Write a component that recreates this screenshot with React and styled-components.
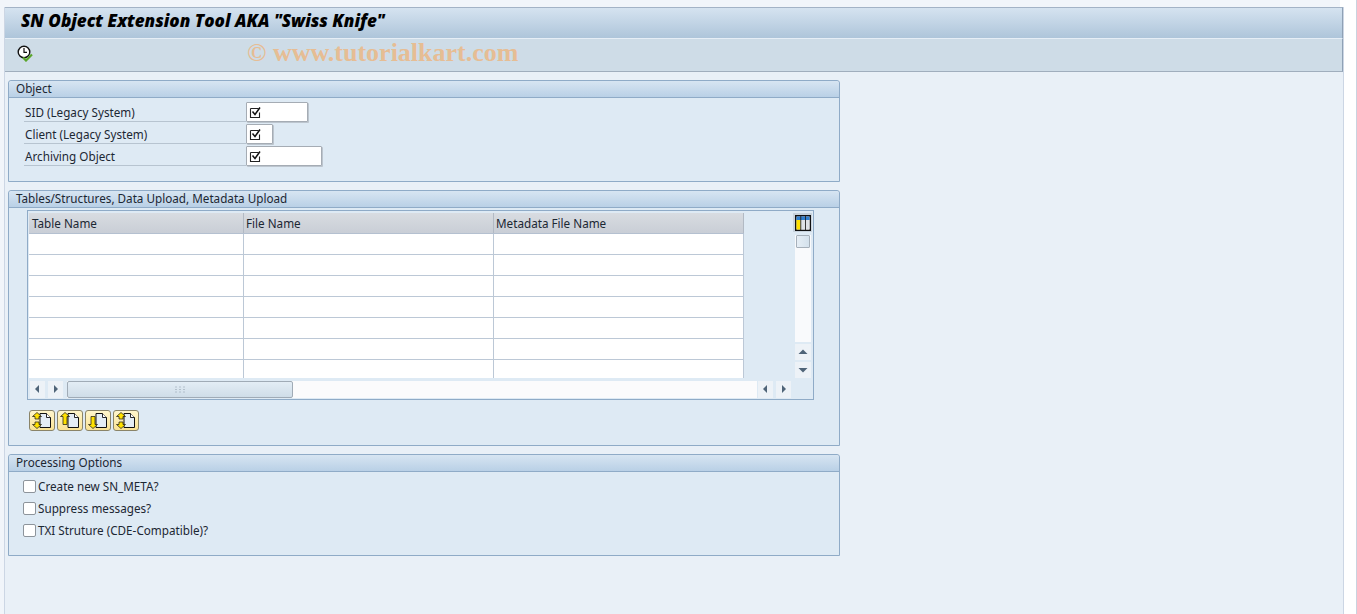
import React from 'react';
import styled, { createGlobalStyle } from 'styled-components';

const GlobalStyle = createGlobalStyle`
  html, body {
    margin: 0;
    padding: 0;
    height: 100%;
    background: #f3f7fb;
    overflow: hidden;
  }
  body {
    font-family: "Noto Sans", "Liberation Sans", sans-serif;
    font-size: 11.7px;
    color: #1c2733;
  }
`;

const ClockCheck = () => (
  <svg width="18" height="18" viewBox="0 0 18 18">
    <circle cx="7" cy="8" r="5.8" fill="#fff" stroke="#111" strokeWidth="1.4" />
    <path d="M7 4v4.3h3" fill="none" stroke="#111" strokeWidth="1.2" />
    <path d="M6 13.5l3 3 6-6" fill="none" stroke="#5aa52c" strokeWidth="2.2" />
  </svg>
);

const CheckMark = () => (
  <svg width="13" height="13" viewBox="0 0 13 13">
    <path d="M1.5 2.5h8M1.5 2.5v9h9v-5" fill="none" stroke="#222" strokeWidth="1.1" />
    <path d="M3.5 5.5l2.5 3 5-7" fill="none" stroke="#111" strokeWidth="1.5" />
  </svg>
);

const LayoutIcon = () => (
  <svg width="16" height="16" viewBox="0 0 16 16">
    <rect x="0.75" y="0.75" width="14.5" height="14.5" fill="#fff" stroke="#111" strokeWidth="1.5" />
    <rect x="1.5" y="1.5" width="13" height="3.5" fill="#2f7fd0" />
    <rect x="1.5" y="5" width="4" height="9.5" fill="#ffe100" />
    <rect x="6" y="5" width="4" height="9.5" fill="#dfe3e7" />
    <rect x="11" y="5" width="3.5" height="9.5" fill="#dfe3e7" />
    <path d="M5.75 1v14M10.5 1v14" stroke="#222" strokeWidth="0.9" />
  </svg>
);

const arrowPaths = {
  up: 'M5 0.5l4.5 4h-2.5v2.5h-4v-2.5h-2.5z',
  down: 'M5 16.5l4.5-4h-2.5v-2.5h-4v2.5h-2.5z',
  longUp: 'M5 0.5l4.5 4h-2.5v8h-4v-8h-2.5z',
  longDown: 'M5 16.5l4.5-4h-2.5v-8h-4v8h-2.5z',
};

const DocArrow = ({ name }) => (
  <path d={arrowPaths[name]} fill="#ffe100" stroke="#111" strokeWidth="0.7" />
);

const UploadIcon = ({ kind }) => (
  <svg width="20" height="17" viewBox="0 0 20 17">
    <path d="M8 1.5h6.5l4 4v10H8z" fill="#e4edf5" stroke="#111" strokeWidth="1" />
    <path d="M14.5 1.5v4h4" fill="#fff" stroke="#111" strokeWidth="0.9" />
    {kind === 'both' && <DocArrow name="up" />}
    {kind === 'both' && <DocArrow name="down" />}
    {kind === 'up' && <DocArrow name="longUp" />}
    {kind === 'down' && <DocArrow name="longDown" />}
  </svg>
);

const Triangle = ({ dir }) => {
  const points = {
    left: '7,2 7,10 3,6',
    right: '4,2 4,10 8,6',
    up: '1.5,8 10.5,8 6,3.5',
    down: '1.5,4 10.5,4 6,8.5',
  };
  return (
    <svg width="12" height="12" viewBox="0 0 12 12">
      <polygon points={points[dir]} fill="#4f6478" />
    </svg>
  );
};

const Grip = () => (
  <svg width="10" height="7" viewBox="0 0 10 7">
    <path d="M0.5 1h1M4.5 1h1M8.5 1h1M0.5 3.5h1M4.5 3.5h1M8.5 3.5h1M0.5 6h1M4.5 6h1M8.5 6h1" stroke="#8d9aa8" />
  </svg>
);

const App = () => (
  <Page>
    <GlobalStyle />
    <Main>
      <TitleBar>
        <Title>SN Object Extension Tool AKA "Swiss Knife"</Title>
      </TitleBar>
      <Toolbar>
        <ClockCheck />
        <Watermark>© www.tutorialkart.com</Watermark>
      </Toolbar>
      <Content>
        <Panel>
          <PanelHeader>Object</PanelHeader>
          <FieldBody>
            <FieldRow>
              <FieldLabel>SID (Legacy System)</FieldLabel>
              <Input $width={62}><CheckMark /></Input>
            </FieldRow>
            <FieldRow>
              <FieldLabel>Client (Legacy System)</FieldLabel>
              <Input $width={27}><CheckMark /></Input>
            </FieldRow>
            <FieldRow>
              <FieldLabel>Archiving Object</FieldLabel>
              <Input $width={76}><CheckMark /></Input>
            </FieldRow>
          </FieldBody>
        </Panel>

        <Panel>
          <PanelHeader>Tables/Structures, Data Upload, Metadata Upload</PanelHeader>
          <TableBody>
            <TableFrame>
              <GridColumn>
                <HeaderRow>
                  <HeaderCell $width={215} $pad={3}>Table Name</HeaderCell>
                  <HeaderCell $width={250} $pad={2}>File Name</HeaderCell>
                  <HeaderCell $width={250} $pad={2}>Metadata File Name</HeaderCell>
                </HeaderRow>
                {[0, 1, 2, 3, 4, 5, 6].map((row) => (
                  <DataRow key={row}>
                    <DataCell $width={215} />
                    <DataCell $width={250} />
                    <DataCell $width={250} />
                  </DataRow>
                ))}
              </GridColumn>
              <SideColumn>
                <LayoutButton><LayoutIcon /></LayoutButton>
                <VScroll>
                  <VThumb />
                </VScroll>
                <ScrollButton><Triangle dir="up" /></ScrollButton>
                <ScrollButton><Triangle dir="down" /></ScrollButton>
              </SideColumn>
              <HScrollRow>
                <ScrollButton $narrow><Triangle dir="left" /></ScrollButton>
                <ScrollButton $narrow><Triangle dir="right" /></ScrollButton>
                <HTrack>
                  <HThumb><Grip /></HThumb>
                </HTrack>
                <ScrollButton $narrow><Triangle dir="left" /></ScrollButton>
                <ScrollButton $narrow><Triangle dir="right" /></ScrollButton>
              </HScrollRow>
            </TableFrame>
            <ButtonRow>
              <IconButton><UploadIcon kind="both" /></IconButton>
              <IconButton><UploadIcon kind="up" /></IconButton>
              <IconButton><UploadIcon kind="down" /></IconButton>
              <IconButton><UploadIcon kind="both" /></IconButton>
            </ButtonRow>
          </TableBody>
        </Panel>

        <Panel>
          <PanelHeader>Processing Options</PanelHeader>
          <OptionBody>
            <OptionRow><CheckBox />Create new SN_META?</OptionRow>
            <OptionRow><CheckBox />Suppress messages?</OptionRow>
            <OptionRow><CheckBox />TXI Struture (CDE-Compatible)?</OptionRow>
          </OptionBody>
        </Panel>
      </Content>
    </Main>
  </Page>
);

export default App;

const Page = styled.div`
  height: 614px;
  box-sizing: border-box;
  padding: 7px 12px 0 4px;
  border-right: 1px solid #c9d3df;
  background: linear-gradient(90deg, #f1f5fa 0 1340px, #fff 1340px);
`;

const Main = styled.div`
  height: 100%;
  background: #e9f0f7;
  border-left: 1px solid #ccd6e4;
  border-right: 1px solid #ccd6e4;
`;

const TitleBar = styled.div`
  height: 24px;
  padding: 0 0 6px 16px;
  border-top: 1px solid #a3b3c6;
  border-right: 1px solid #8fa1b5;
  background: linear-gradient(#d5e3f0, #aec5da);
  display: flex;
  align-items: center;
`;

const Title = styled.div`
  font-family: "Open Sans", "Liberation Sans", sans-serif;
  font-size: 17.1px;
  font-weight: 800;
  font-style: italic;
  color: #000;
  white-space: nowrap;
`;

const Toolbar = styled.div`
  height: 27px;
  padding: 0 0 5px 12px;
  border-top: 1px solid #e6eef6;
  border-bottom: 1px solid #a0aebd;
  border-right: 1px solid #8fa1b5;
  background: #cedce7;
  display: flex;
  align-items: center;
`;

const Watermark = styled.div`
  margin-left: 212px;
  font-family: "Liberation Serif", serif;
  font-size: 26px;
  font-weight: 700;
  color: #e6bd94;
  white-space: nowrap;
`;

const Content = styled.div`
  padding: 8px 0 0 3px;
  display: flex;
  flex-direction: column;
  gap: 8px;
`;

const Panel = styled.section`
  width: 830px;
  border: 1px solid #8fabc7;
  border-radius: 3px 3px 0 0;
  background: #deeaf4;
`;

const PanelHeader = styled.div`
  height: 16px;
  line-height: 15px;
  padding-left: 7px;
  background: linear-gradient(#d7e5f2, #b9d0e6);
  border-bottom: 1px solid #8fabc7;
  border-radius: 3px 3px 0 0;
`;

const FieldBody = styled.div`
  height: 83px;
  box-sizing: border-box;
  padding: 4px 0 0 15px;
`;

const FieldRow = styled.div`
  height: 22px;
  display: flex;
  align-items: flex-start;
`;

const FieldLabel = styled.div`
  width: 222px;
  height: 20px;
  line-height: 20px;
  box-sizing: border-box;
  padding-left: 1px;
  border-bottom: 1px solid #b7c4d0;
`;

const Input = styled.div`
  width: ${(p) => p.$width}px;
  height: 20px;
  box-sizing: border-box;
  background: #fff;
  border: 1px solid #a5acb4;
  border-radius: 1px;
  box-shadow: 1px 1px 0 #bcc5ce;
  display: flex;
  align-items: center;
  padding-left: 2px;
`;

const TableBody = styled.div`
  height: 237px;
  box-sizing: border-box;
  padding: 2px 0 0 18px;
`;

const TableFrame = styled.div`
  width: 787px;
  height: 190px;
  box-sizing: border-box;
  border: 1px solid #8fabc7;
  padding: 2px 0 0 1px;
  display: grid;
  grid-template-columns: 766px 18px;
  grid-template-rows: 167px 18px;
`;

const GridColumn = styled.div`
  width: 715px;
  height: 165px;
  overflow: hidden;
`;

const HeaderRow = styled.div`
  display: flex;
  height: 20px;
  border-bottom: 1px solid #b4c0d0;
  background: linear-gradient(#d8dce1, #c9ced6);
`;

const HeaderCell = styled.div`
  width: ${(p) => p.$width}px;
  box-sizing: border-box;
  padding-left: ${(p) => p.$pad}px;
  line-height: 21px;
  border-right: 1px solid #b2bac4;
`;

const DataRow = styled.div`
  display: flex;
  height: 20px;
  background: #fff;
  border-bottom: 1px solid #bcc8d6;
`;

const DataCell = styled.div`
  width: ${(p) => p.$width}px;
  box-sizing: border-box;
  border-right: 1px solid #bcc8d6;
`;

const SideColumn = styled.div`
  display: flex;
  flex-direction: column;
  align-items: flex-start;
  gap: 2px;
`;

const LayoutButton = styled.div`
  width: 19px;
  height: 19px;
  margin: 0 0 1px -2px;
  display: flex;
  align-items: center;
  justify-content: center;
  background: #c8d3dd;
`;

const VScroll = styled.div`
  width: 16px;
  height: 107px;
  background: #f9fafc;
`;

const VThumb = styled.div`
  width: 14px;
  height: 13px;
  box-sizing: border-box;
  margin-left: 1px;
  border: 1px solid #a6b0ba;
  border-radius: 1px;
  background: linear-gradient(90deg, #e6eef5, #d4e1ec);
`;

const ScrollButton = styled.div`
  width: ${(p) => (p.$narrow ? 15 : 16)}px;
  height: ${(p) => (p.$narrow ? 17 : 16)}px;
  flex: none;
  display: flex;
  align-items: center;
  justify-content: center;
  background: #edf2f7;
`;

const HScrollRow = styled.div`
  grid-column: 1 / 3;
  display: flex;
  align-items: center;
  gap: 3px;
  width: 761px;
  padding-left: 1px;
`;

const HTrack = styled.div`
  flex: 1;
  height: 17px;
  margin: 0 -2px 0 1px;
  background: #fbfbfc;
`;

const HThumb = styled.div`
  width: 226px;
  height: 17px;
  box-sizing: border-box;
  border: 1px solid #a0abb6;
  border-radius: 2px;
  background: linear-gradient(#e3edf5, #cfdde8);
  display: flex;
  align-items: center;
  justify-content: center;
`;

const ButtonRow = styled.div`
  display: flex;
  gap: 2px;
  margin: 10px 0 0 2px;
`;

const IconButton = styled.div`
  width: 26px;
  height: 21px;
  box-sizing: border-box;
  border: 1px solid #8a8468;
  border-radius: 3px;
  background: linear-gradient(#fff6cc, #f9e294);
  display: flex;
  align-items: center;
  justify-content: center;
`;

const OptionBody = styled.div`
  height: 83px;
  box-sizing: border-box;
  padding: 3px 0 0 14px;
`;

const OptionRow = styled.div`
  height: 22px;
  display: flex;
  align-items: center;
  gap: 2px;
`;

const CheckBox = styled.div`
  width: 13px;
  height: 13px;
  box-sizing: border-box;
  background: #fff;
  border: 1px solid #8d949b;
  border-radius: 2px;
`;
